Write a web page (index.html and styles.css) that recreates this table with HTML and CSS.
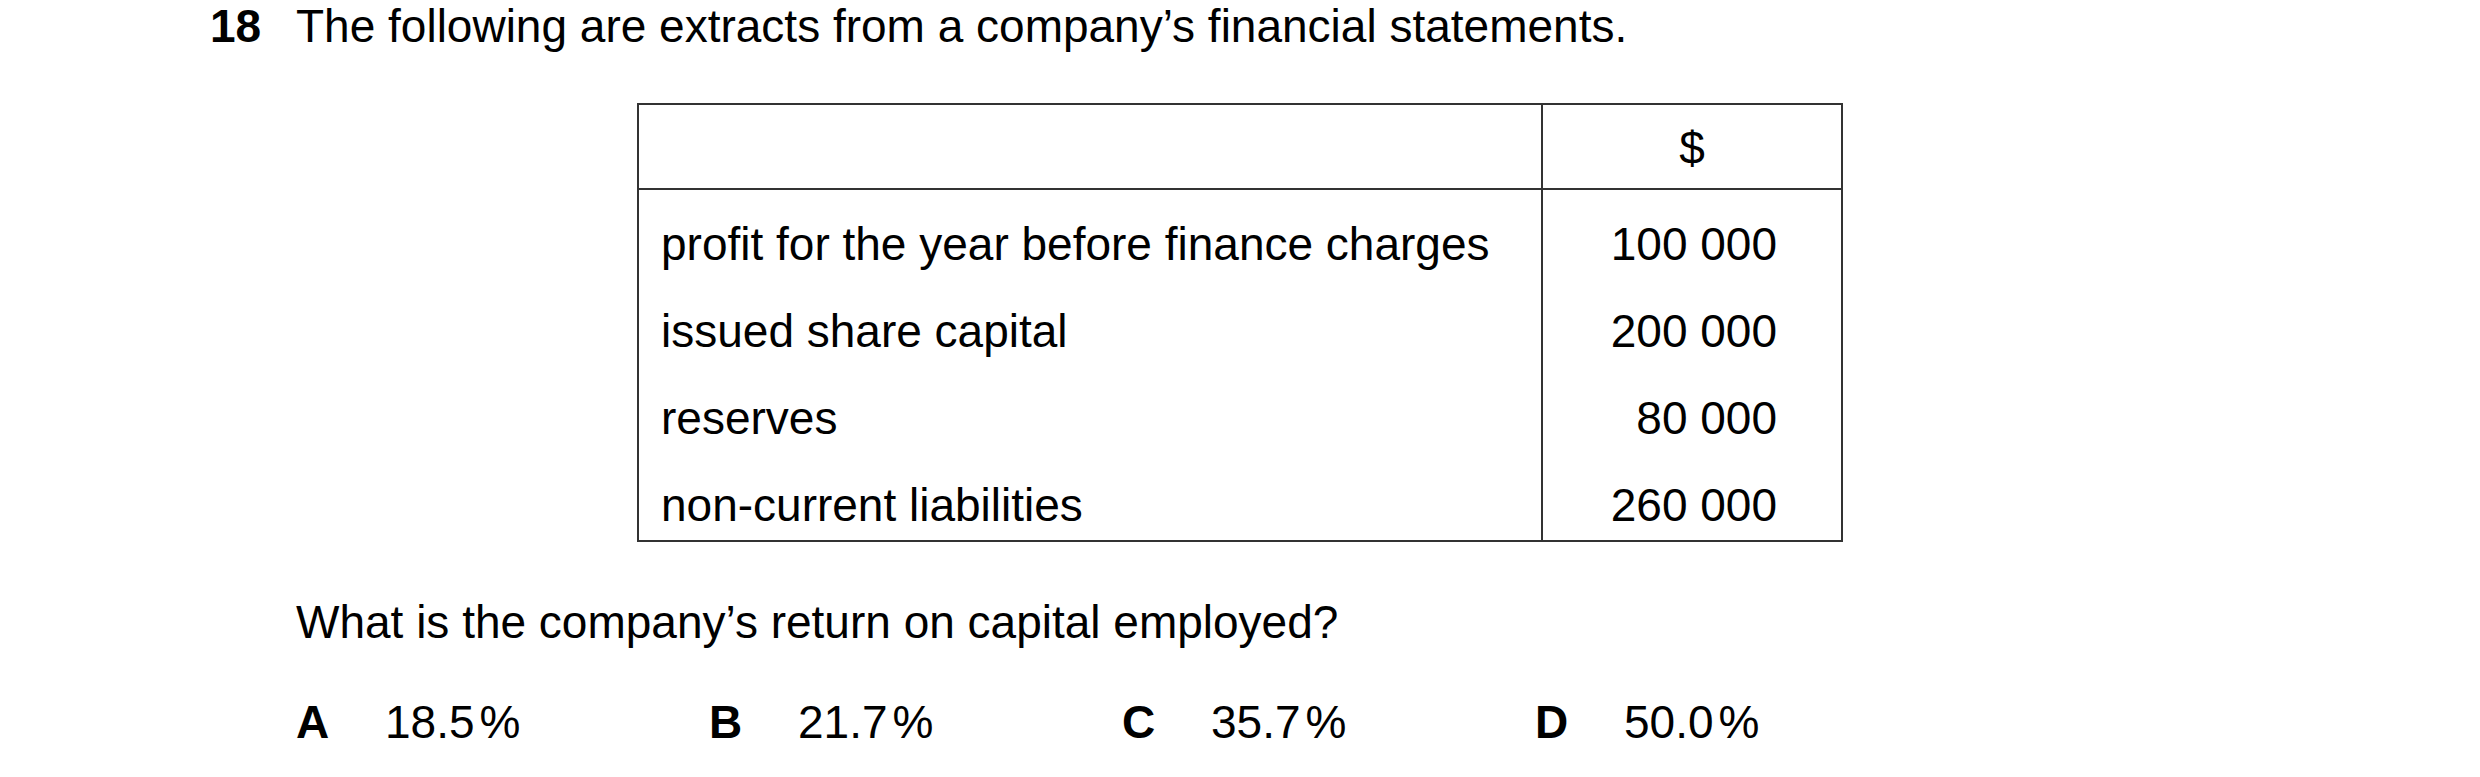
FILE: index.html
```html
<!DOCTYPE html>
<html>
<head>
<meta charset="utf-8">
<link rel="stylesheet" href="styles.css">
</head>
<body>
<div class="question">
  <div class="q-head">
    <span class="q-num">18</span>
    <span class="q-text">The following are extracts from a company’s financial statements.</span>
  </div>
  <div class="q-body">
    <div class="fin-table">
      <div class="cell head left"></div>
      <div class="cell head right">$</div>
      <div class="cell body left">
        <div class="row">profit for the year before finance charges</div>
        <div class="row">issued share capital</div>
        <div class="row">reserves</div>
        <div class="row">non-current liabilities</div>
      </div>
      <div class="cell body right nums">
        <div class="row">100 000</div>
        <div class="row">200 000</div>
        <div class="row">80 000</div>
        <div class="row">260 000</div>
      </div>
    </div>
    <p class="prompt">What is the company’s return on capital employed?</p>
    <div class="options">
      <div class="opt"><span class="letter">A</span><span class="val">18.5<span class="pct">%</span></span></div>
      <div class="opt"><span class="letter">B</span><span class="val">21.7<span class="pct">%</span></span></div>
      <div class="opt"><span class="letter">C</span><span class="val">35.7<span class="pct">%</span></span></div>
      <div class="opt"><span class="letter">D</span><span class="val">50.0<span class="pct">%</span></span></div>
    </div>
  </div>
</div>
</body>
</html>
```
FILE: styles.css
```css
html, body {
  margin: 0;
  padding: 0;
  background: #ffffff;
}
body {
  font-family: "Liberation Sans", Arial, sans-serif;
  font-size: 46px;
  line-height: 52px;
  color: #000000;
}
.question {
  padding-left: 210px;
}
.q-head {
  display: flex;
}
.q-num {
  font-weight: bold;
  width: 86px;
  flex: none;
}
.q-body {
  padding-left: 86px;
}
.fin-table {
  margin-top: 51px;
  margin-left: 341px;
  width: 1202px;
  border: 2px solid #333333;
  display: grid;
  grid-template-columns: 904px 298px;
}
.cell.head {
  height: 83px;
  border-bottom: 2px solid #333333;
}
.cell.left {
  border-right: 2px solid #333333;
}
.cell.head.right {
  padding-top: 17px;
  height: 66px;
  text-align: center;
}
.cell.body {
  padding-top: 28px;
  padding-bottom: 9px;
  display: flex;
  flex-direction: column;
  gap: 35px;
}
.cell.body.left {
  padding-left: 22px;
}
.cell.nums {
  padding-right: 64px;
  text-align: right;
}
.prompt {
  margin: 54px 0 0 0;
}
.options {
  margin-top: 48px;
  display: grid;
  grid-template-columns: repeat(4, 413px);
}
.letter {
  display: inline-block;
  width: 89px;
  font-weight: bold;
}
.pct {
  margin-left: 5px;
}
```
